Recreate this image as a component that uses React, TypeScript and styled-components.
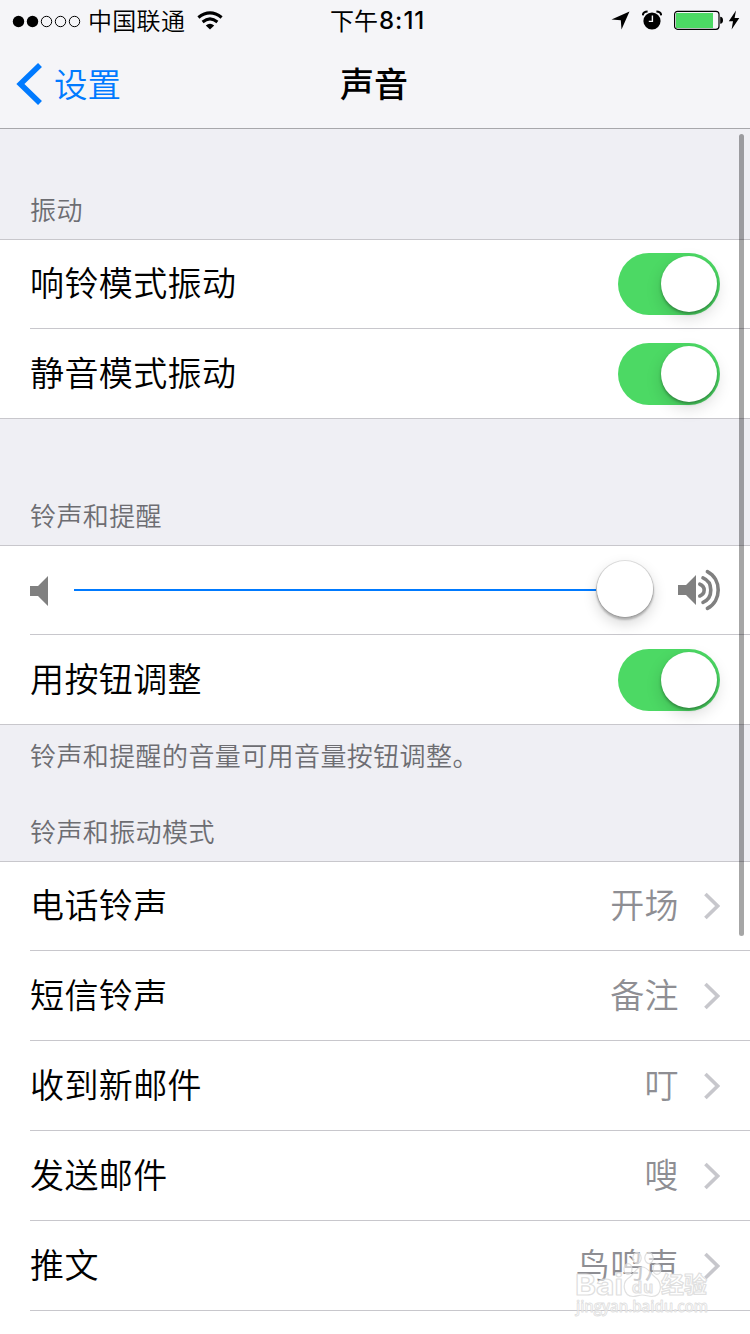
import React from "react";
import styled, { createGlobalStyle } from "styled-components";

const GlobalStyle = createGlobalStyle`
  * { box-sizing: border-box; }
  html, body { margin: 0; padding: 0; }
  body {
    width: 750px;
    height: 1334px;
    overflow: hidden;
    background: #efeff4;
    font-family: "Noto Sans CJK SC", sans-serif;
    color: #000;
  }
`;

const Screen = styled.div`
  position: relative;
  width: 750px;
  height: 1334px;
  overflow: hidden;
  background: #efeff4;
`;

const Header = styled.header`
  height: 129px;
  background: #f5f5f8;
  border-bottom: 1px solid #a7a7ab;
`;

const StatusBar = styled.div`
  display: grid;
  grid-template-columns: 330px 1fr auto;
  height: 40px;
  align-items: center;
  font-size: 24px;
  font-weight: 350;
  line-height: 40px;
`;

const StatusLeft = styled.div`
  display: flex;
  align-items: center;
  height: 40px;
  padding-left: 12px;
`;

const Carrier = styled.span`
  margin: 0 12px 0 6px;
  padding-bottom: 2px;
  letter-spacing: 0.3px;
`;

const Clock = styled.div`
  display: flex;
  font-weight: 400;
`;

const Digits = styled.span`
  margin-left: 1px;
  font-family: Inter, sans-serif;
  font-weight: 500;
  font-size: 24px;
  letter-spacing: 1px;
  line-height: 42px;
`;

const StatusRight = styled.div`
  display: flex;
  align-items: center;
  height: 38px;
  margin-bottom: 2px;
  padding-right: 10px;
`;

const StatusGap = styled.span<{ $width: number }>`
  width: ${(p) => p.$width}px;
`;

const NavBar = styled.nav`
  display: grid;
  grid-template-columns: 250px 1fr 252px;
  height: 88px;
  align-items: center;
`;

const BackButton = styled.div`
  display: flex;
  align-items: center;
  gap: 11px;
  height: 88px;
  padding-left: 15px;
  color: #007aff;
  font-size: 33.5px;
  font-weight: 350;
  line-height: 46px;
`;

const BackLabel = styled.span`
  padding-bottom: 2px;
`;

const Title = styled.h1`
  margin: 0;
  padding-bottom: 3px;
  text-align: center;
  font-size: 34px;
  font-weight: 500;
  line-height: 46px;
`;

const SectionLabel = styled.div<{ $height: number }>`
  display: flex;
  align-items: flex-end;
  height: ${(p) => p.$height}px;
  padding: 0 30px 11px;
  color: #6d6d72;
  font-size: 26px;
  font-weight: 350;
  letter-spacing: 0.4px;
  line-height: 38px;
`;

const Footnote = styled.div`
  height: 60px;
  padding: 11px 30px 0;
  color: #6d6d72;
  font-size: 26px;
  font-weight: 350;
  letter-spacing: 0.4px;
  line-height: 38px;
`;

const Group = styled.section`
  background: #fff;
  border-top: 1px solid #c8c7cc;
  border-bottom: 1px solid #c8c7cc;
`;

const Row = styled.div`
  display: flex;
  align-items: center;
  justify-content: space-between;
  height: 89px;
  padding-top: 1px;
  margin-left: 30px;
  padding-right: 30px;
  & + & {
    height: 90px;
    border-top: 1px solid #c8c7cc;
  }
  &:first-child {
    height: 88px;
    padding-top: 0;
  }
`;

const RowLabel = styled.span`
  padding-bottom: 5px;
  font-size: 34px;
  font-weight: 350;
  letter-spacing: 0.4px;
  line-height: 50px;
`;

const RowValue = styled.div`
  display: flex;
  align-items: center;
  gap: 24px;
  color: #8e8e93;
`;

const Switch = styled.div`
  display: flex;
  justify-content: flex-end;
  width: 102px;
  height: 62px;
  padding: 3px;
  border-radius: 31px;
  background: #4cd964;
`;

const SwitchKnob = styled.div`
  width: 56px;
  height: 56px;
  border-radius: 50%;
  background: #fff;
  box-shadow: 0 6px 16px rgba(0, 0, 0, 0.15), 0 2px 3px rgba(0, 0, 0, 0.3);
`;

const VolumeControl = styled.div`
  display: flex;
  align-items: center;
  justify-content: space-between;
  flex: 1;
`;

const Slider = styled.div`
  display: flex;
  align-items: center;
  width: 580px;
  height: 58px;
  margin: 0 0 2px 2px;
`;

const SliderTrack = styled.div`
  flex: 1;
  height: 2px;
  margin-top: 2px;
  background: #007aff;
`;

const SliderKnob = styled.div`
  width: 58px;
  height: 58px;
  border: 1px solid rgba(0, 0, 0, 0.1);
  background-clip: padding-box;
  border-radius: 50%;
  background-color: #fff;
  box-shadow: 0 6px 14px rgba(0, 0, 0, 0.15), 0 2px 2px rgba(0, 0, 0, 0.22);
`;

const ScrollThumb = styled.div`
  position: absolute;
  top: 134px;
  right: 6px;
  width: 5px;
  height: 802px;
  border-radius: 3px;
  background: rgba(0, 0, 0, 0.35);
`;

const Watermark = styled.svg`
  position: absolute;
  left: 570px;
  top: 1248px;
`;

const SignalDots = () => (
  <svg width="70" height="14" viewBox="0 0 70 14">
    {[0, 1, 2, 3, 4].map((i) => (
      <circle
        key={i}
        cx={6.5 + i * 14}
        cy={7.5}
        r={i < 2 ? 5.7 : 5.2}
        fill={i < 2 ? "#000" : "none"}
        stroke={i < 2 ? "none" : "#000"}
        strokeWidth="1"
      />
    ))}
  </svg>
);

const WifiIcon = () => (
  <svg width="26" height="20" viewBox="0 0 26 20" fill="none" stroke="#000">
    <path d="M1.4 6.4Q13 -2.8 24.6 6.4" strokeWidth="3.2" />
    <path d="M5.6 11Q13 4.8 20.4 11" strokeWidth="3" />
    <path d="M13 18.6L8.8 14.6Q13 11 17.2 14.6Z" fill="#000" stroke="none" />
  </svg>
);

const LocationIcon = () => (
  <svg width="19" height="19" viewBox="0 0 19 19">
    <path d="M18.5 0.5L10.5 18.5L9.8 9.2L0.5 8.5Z" />
  </svg>
);

const AlarmIcon = () => (
  <svg width="20" height="20" viewBox="0 0 20 20">
    <circle cx="10" cy="11" r="8.6" />
    <path d="M0.8 5.4Q1 1.4 5.6 1.4M14.4 1.4Q19 1.4 19.2 5.4" fill="none" stroke="#000" strokeWidth="2" />
    <path d="M10.4 5.6V11.4H6.8" fill="none" stroke="#f5f5f8" strokeWidth="1.4" />
  </svg>
);

const BatteryIcon = () => (
  <svg width="50" height="20" viewBox="0 0 50 20">
    <rect x="0.6" y="1.3" width="44.4" height="18" rx="3" fill="none" stroke="#000" strokeWidth="1.2" />
    <rect x="2" y="3" width="37" height="15" fill="#4cd964" />
    <path d="M46.2 6.8Q49 7.2 49 10.3T46.2 13.8Z" />
  </svg>
);

const BoltIcon = () => (
  <svg width="12" height="20" viewBox="0 0 12 20">
    <path d="M8 0.5L0.8 11.2H5L3.6 19.5L11.3 8H6.6Z" />
  </svg>
);

const BackChevron = () => (
  <svg width="28" height="42" viewBox="0 0 28 42">
    <path d="M25 2L5.4 21L25 40" fill="none" stroke="#007aff" strokeWidth="5.6" />
  </svg>
);

const Chevron = () => (
  <svg width="17" height="28" viewBox="0 0 17 28">
    <path d="M2.4 2L14.6 14L2.4 26" fill="none" stroke="#c7c7cc" strokeWidth="3.6" />
  </svg>
);

const SpeakerLow = styled.svg`
  margin-top: 2px;
`;

const SpeakerHigh = () => (
  <svg width="42" height="42" viewBox="0 0 42 42">
    <path d="M0 16H8L18 6V36L8 26H0Z" fill="#808080" />
    <g fill="none" stroke="#808080" strokeWidth="3.6" strokeLinecap="round">
      <path d="M21.8 15.2C27.6 17.4 27.6 24.8 21.8 27" />
      <path d="M25 8.8C35.4 13 35.4 29.2 25 33.4" />
      <path d="M29.4 2.6C43.8 10 43.8 32 29.4 39.4" />
    </g>
  </svg>
);

const BaiduMark = () => (
  <Watermark width="145" height="76" viewBox="0 0 145 76">
    <g
      fill="#fff"
      fillOpacity="0.55"
      stroke="#d8d8d8"
      strokeOpacity="0.8"
      strokeWidth="1.2"
      strokeLinejoin="round"
    >
      <ellipse cx="58" cy="21" rx="4" ry="5.4" />
      <ellipse cx="67" cy="10" rx="4.2" ry="5.6" />
      <ellipse cx="79" cy="10" rx="4.2" ry="5.6" />
      <ellipse cx="87" cy="21" rx="4" ry="5.4" />
      <path d="M72 19C66 19 65 25 60 29C51 34 53 48 63 48.500C67 48.500 69 47 72 47C76 47 78 48.500 82 48.500C92 48 93 35 85 29C80 25 78 19 72 19Z" />
      <text x="5" y="47" fontFamily="Inter, sans-serif" fontWeight="700" fontSize="29" textLength="48" lengthAdjust="spacingAndGlyphs">Bai</text>
      <text x="62" y="45" fontFamily="Inter, sans-serif" fontWeight="600" fontSize="16" textLength="21">du</text>
      <text x="91" y="45" fontFamily="Noto Sans CJK SC, sans-serif" fontWeight="700" fontSize="23" textLength="46">经验</text>
      <text x="6" y="64" fontFamily="Open Sans, sans-serif" fontWeight="600" fontSize="15.5" textLength="132" lengthAdjust="spacingAndGlyphs" strokeWidth="0.9">jingyan.baidu.com</text>
    </g>
  </Watermark>
);

const ToggleRow = ({ label }: { label: string }) => (
  <Row>
    <RowLabel>{label}</RowLabel>
    <Switch role="switch" aria-checked="true">
      <SwitchKnob />
    </Switch>
  </Row>
);

const LinkRow = ({ label, value }: { label: string; value: string }) => (
  <Row>
    <RowLabel>{label}</RowLabel>
    <RowValue>
      <RowLabel>{value}</RowLabel>
      <Chevron />
    </RowValue>
  </Row>
);

const sounds = [
  ["电话铃声", "开场"],
  ["短信铃声", "备注"],
  ["收到新邮件", "叮"],
  ["发送邮件", "嗖"],
  ["推文", "鸟鸣声"],
];

export default function App() {
  return (
    <Screen>
      <GlobalStyle />
      <Header>
        <StatusBar>
          <StatusLeft>
            <SignalDots />
            <Carrier>中国联通</Carrier>
            <WifiIcon />
          </StatusLeft>
          <Clock>
            下午<Digits>8:11</Digits>
          </Clock>
          <StatusRight>
            <LocationIcon />
            <StatusGap $width={12} />
            <AlarmIcon />
            <StatusGap $width={12} />
            <BatteryIcon />
            <StatusGap $width={4} />
            <BoltIcon />
          </StatusRight>
        </StatusBar>
        <NavBar>
          <BackButton>
            <BackChevron />
            <BackLabel>设置</BackLabel>
          </BackButton>
          <Title>声音</Title>
        </NavBar>
      </Header>

      <SectionLabel $height={110}>振动</SectionLabel>
      <Group>
        <ToggleRow label="响铃模式振动" />
        <ToggleRow label="静音模式振动" />
      </Group>

      <SectionLabel $height={126}>铃声和提醒</SectionLabel>
      <Group>
        <Row>
          <VolumeControl>
            <SpeakerLow width="18" height="30" viewBox="0 0 18 30">
              <path d="M0 10H8L18 0V30L8 20H0Z" fill="#808080" />
            </SpeakerLow>
            <Slider>
              <SliderTrack />
              <SliderKnob />
            </Slider>
            <SpeakerHigh />
          </VolumeControl>
        </Row>
        <ToggleRow label="用按钮调整" />
      </Group>

      <Footnote>铃声和提醒的音量可用音量按钮调整。</Footnote>
      <SectionLabel $height={76}>铃声和振动模式</SectionLabel>
      <Group>
        {sounds.map(([label, value]) => (
          <LinkRow key={label} label={label} value={value} />
        ))}
        <Row />
      </Group>

      <ScrollThumb />
      <BaiduMark />
    </Screen>
  );
}
